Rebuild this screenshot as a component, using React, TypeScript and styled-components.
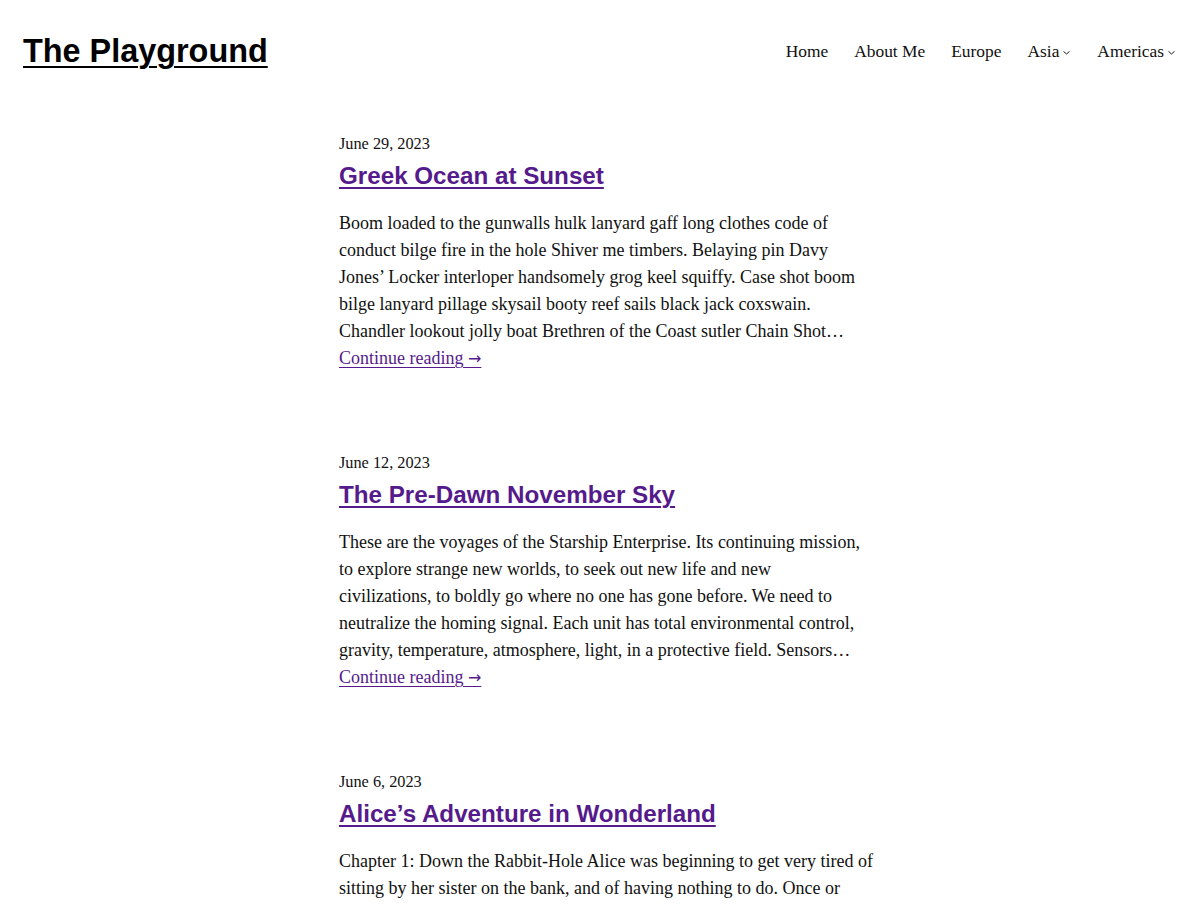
import React from "react";
import styled, { createGlobalStyle } from "styled-components";

const GlobalStyle = createGlobalStyle`
  html, body { margin: 0; padding: 0; background: #ffffff; }
  body { font-family: "Liberation Serif", "DejaVu Serif", serif; color: #111111; }
  * { box-sizing: border-box; }
`;

const Page = styled.div`
  width: 1200px;
  height: 904px;
  overflow: hidden;
`;

const Header = styled.header`
  display: flex;
  align-items: center;
  justify-content: space-between;
  padding: 31px 24px 0 23px;
`;

const SiteTitle = styled.a`
  font-family: "Liberation Sans", Arial, sans-serif;
  font-weight: 700;
  font-size: 32.4px;
  line-height: 40px;
  color: #000000;
  text-decoration: underline;
  text-decoration-thickness: 2px;
  text-underline-offset: 4px;
`;

const Nav = styled.nav`
  display: flex;
  align-items: center;
  gap: 26px;
`;

const NavItem = styled.a`
  display: flex;
  align-items: center;
  gap: 3px;
  font-size: 17.4px;
  line-height: 24px;
  color: #111111;
  text-decoration: none;
`;

const Chevron = styled.svg`
  width: 9px;
  height: 9px;
  margin-top: 3px;
`;

const Main = styled.main`
  width: 522px;
  margin: 0 auto;
  padding-top: 62px;
  display: flex;
  flex-direction: column;
  gap: 80px;
`;

const Post = styled.article`
  display: flex;
  flex-direction: column;
`;

const PostDate = styled.time`
  font-size: 16.3px;
  line-height: 22px;
  color: #111111;
`;

const PostTitle = styled.a`
  font-family: "Liberation Sans", Arial, sans-serif;
  font-weight: 700;
  font-size: 24.2px;
  line-height: 30px;
  color: #551a8b;
  text-decoration: underline;
  text-decoration-thickness: 2px;
  text-underline-offset: 3px;
  margin-top: 6px;
  align-self: flex-start;
`;

const Excerpt = styled.p`
  margin: 19px 0 0;
  font-size: 18px;
  line-height: 27px;
  color: #111111;
  white-space: nowrap;
`;

const MoreLink = styled.a`
  font-size: 18px;
  line-height: 27px;
  color: #551a8b;
  text-decoration: underline;
  text-underline-offset: 3px;
  align-self: flex-start;
`;

const Arrow = styled.span`
  font-family: "DejaVu Sans", sans-serif;
  font-size: 16px;
`;

const ChevronIcon = () => (
  <Chevron viewBox="0 0 12 12" fill="none" stroke="#111" strokeWidth="1.3">
    <path d="M2 4.5 L6 8 L10 4.5" />
  </Chevron>
);

const posts = [
  {
    date: "June 29, 2023",
    title: "Greek Ocean at Sunset",
    lines: [
      "Boom loaded to the gunwalls hulk lanyard gaff long clothes code of",
      "conduct bilge fire in the hole Shiver me timbers. Belaying pin Davy",
      "Jones’ Locker interloper handsomely grog keel squiffy. Case shot boom",
      "bilge lanyard pillage skysail booty reef sails black jack coxswain.",
      "Chandler lookout jolly boat Brethren of the Coast sutler Chain Shot…",
    ],
  },
  {
    date: "June 12, 2023",
    title: "The Pre-Dawn November Sky",
    lines: [
      "These are the voyages of the Starship Enterprise. Its continuing mission,",
      "to explore strange new worlds, to seek out new life and new",
      "civilizations, to boldly go where no one has gone before. We need to",
      "neutralize the homing signal. Each unit has total environmental control,",
      "gravity, temperature, atmosphere, light, in a protective field. Sensors…",
    ],
  },
  {
    date: "June 6, 2023",
    title: "Alice’s Adventure in Wonderland",
    lines: [
      "Chapter 1: Down the Rabbit-Hole Alice was beginning to get very tired of",
      "sitting by her sister on the bank, and of having nothing to do. Once or",
      "twice she had peeped into the book her sister was reading, but it had",
      "no pictures or conversations in it, “and what is the use of a book,”",
      "thought Alice “without pictures or conversations?” So she was…",
    ],
  },
];

export default function App() {
  return (
    <Page>
      <GlobalStyle />
      <Header>
        <SiteTitle href="#">The Playground</SiteTitle>
        <Nav>
          <NavItem href="#">Home</NavItem>
          <NavItem href="#">About Me</NavItem>
          <NavItem href="#">Europe</NavItem>
          <NavItem href="#">
            Asia
            <ChevronIcon />
          </NavItem>
          <NavItem href="#">
            Americas
            <ChevronIcon />
          </NavItem>
        </Nav>
      </Header>
      <Main>
        {posts.map((p) => (
          <Post key={p.title}>
            <PostDate>{p.date}</PostDate>
            <PostTitle href="#">{p.title}</PostTitle>
            <Excerpt>
              {p.lines.map((l, i) => (
                <React.Fragment key={i}>
                  {l}
                  {i < p.lines.length - 1 && <br />}
                </React.Fragment>
              ))}
            </Excerpt>
            <MoreLink href="#">
              Continue reading <Arrow>→</Arrow>
            </MoreLink>
          </Post>
        ))}
      </Main>
    </Page>
  );
}
